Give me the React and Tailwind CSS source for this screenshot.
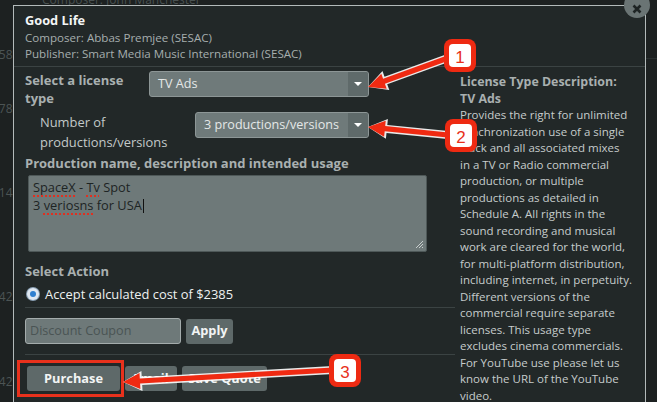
import React from 'react'

const descriptionLines = [
  'Provides the right for unlimited',
  'synchronization use of a single',
  'track and all associated mixes',
  'in a TV or Radio commercial',
  'production, or multiple',
  'productions as detailed in',
  'Schedule A. All rights in the',
  'sound recording and musical',
  'work are cleared for the world,',
  'for multi-platform distribution,',
  'including internet, in perpetuity.',
  'Different versions of the',
  'commercial require separate',
  'licenses. This usage type',
  'excludes cinema commercials.',
  'For YouTube use please let us',
  'know the URL of the YouTube',
  'video.',
]

function arrowPoints([tx, ty], [hx, hy], shaft = 2.6, head = 8, len = 17) {
  const dx = hx - tx
  const dy = hy - ty
  const d = Math.hypot(dx, dy)
  const ux = dx / d
  const uy = dy / d
  const nx = -uy
  const ny = ux
  const bx = hx - ux * len
  const by = hy - uy * len
  const p = [
    [tx + nx * shaft, ty + ny * shaft],
    [bx + nx * shaft, by + ny * shaft],
    [bx + nx * head, by + ny * head],
    [hx, hy],
    [bx - nx * head, by - ny * head],
    [bx - nx * shaft, by - ny * shaft],
    [tx - nx * shaft, ty - ny * shaft],
  ]
  return p.map(([x, y]) => `${x.toFixed(1)},${y.toFixed(1)}`).join(' ')
}

function Badge({ x, y, n }) {
  return (
    <g>
      <rect x={x} y={y} width="32" height="33" rx="8" fill="#ee2a12" />
      <rect x={x + 5} y={y + 5} width="22" height="23" rx="4" fill="#ffffff" />
      <text
        x={x + 16}
        y={y + 23.5}
        textAnchor="middle"
        fontSize="17"
        fontFamily="Liberation Sans, Arial, sans-serif"
        fill="#e8301a"
      >
        {n}
      </text>
    </g>
  )
}

function Callouts() {
  const arrows = [
    [[448, 58], [368, 87]],
    [[448, 135], [368, 127]],
    [[333, 370], [123, 382]],
  ]
  return (
    <svg className="absolute inset-0 pointer-events-none" width="657" height="402">
      {arrows.map(([a, b], i) => (
        <polygon key={'o' + i} points={arrowPoints(a, b, 4, 10, 19)} fill="#ffffff" opacity="0.9" />
      ))}
      {arrows.map(([a, b], i) => (
        <polygon key={'r' + i} points={arrowPoints(a, b)} fill="#ef2a12" />
      ))}
      <Badge x={444} y={39} n="1" />
      <Badge x={445} y={119} n="2" />
      <Badge x={329} y={354} n="3" />
    </svg>
  )
}

function Select({ value, className }) {
  return (
    <div className={`flex h-[26px] shrink-0 rounded-[3px] border border-[#8d9696] bg-[#6f7a7a] ${className}`}>
      <div className="flex-1 px-[8px] text-[12.6px] leading-[24px] text-[#e4e8e8] truncate">{value}</div>
      <div className="flex w-[20px] items-center justify-center rounded-r-[2px] bg-[#5f6a6a]">
        <div className="h-0 w-0 border-x-[4px] border-t-[4px] border-x-transparent border-t-white" />
      </div>
    </div>
  )
}

function Btn({ children, className = '' }) {
  return (
    <div className={`flex h-[25px] items-center justify-center rounded-[3px] bg-[#5e6969] text-[12.8px] font-bold text-[#f2f4f4] ${className}`}>
      {children}
    </div>
  )
}

const wavy = 'underline decoration-dotted decoration-[#e03020] decoration-2 underline-offset-[3px]'

export default function App() {
  return (
    <div className="relative h-[402px] w-[657px] overflow-hidden bg-[#1d2121] font-['Open_Sans',sans-serif]">
      {/* page behind the dialog */}
      <div className="absolute left-[42px] top-[-9px] text-[12px] text-[#4a5252]">Composer: John Manchester</div>
      {[['358', 46], ['278', 100], ['714', 184], ['642', 288], ['642', 373]].map(([t, y]) => (
        <div key={y} className="absolute left-[-8px] text-[12px] text-[#4c5454]" style={{ top: y }}>
          {t}
        </div>
      ))}
      <div className="absolute right-0 top-[58px] h-px w-[12px] bg-[#2a3030]" />

      {/* dialog */}
      <div className="absolute left-[13px] top-[5px] h-[420px] w-[633px] border border-[#b3baba] bg-[#222828]">
        <div className="px-[11px] pt-[4px]">
          <div className="text-[12.8px] font-bold leading-[20px] text-[#f4f6f6]">Good Life</div>
          <div className="text-[11.6px] leading-[16px] text-[#a6aeae]">Composer: Abbas Premjee (SESAC)</div>
          <div className="text-[11.6px] leading-[16px] text-[#a6aeae]">Publisher: Smart Media Music International (SESAC)</div>
        </div>
        <div className="mt-[4px] h-px bg-[#3b4343]" />

        <div className="flex">
          {/* left column */}
          <div className="w-[441px] shrink-0 pl-[11px]">
            <div className="mt-[4px] flex items-start">
              <div className="w-[124px] pr-[12px] text-[13px] font-bold leading-[18px] text-[#a9b0b0]">Select a license type</div>
              <Select value="TV Ads" className="w-[220px]" />
            </div>
            <div className="mt-[5px] flex items-start">
              <div className="w-[170px] pl-[15px] text-[12.9px] leading-[20px] text-[#c3c9c9]">Number of productions/versions</div>
              <Select value="3 productions/versions" className="w-[174px]" />
            </div>
            <div className="mt-[2px] text-[13px] font-bold leading-[18px] text-[#a9b0b0]">
              Production name, description and intended usage
            </div>
            <div className="relative ml-[3px] mt-[3px] h-[77px] w-[399px] rounded-[2px] border border-[#4e5858] bg-[#6e7979] px-[4px] pt-[3px] text-[12.8px] leading-[17px] text-[#1d2424]">
              <div>
                <span className={wavy}>SpaceX</span> - <span className={wavy}>Tv</span> Spot
              </div>
              <div>
                3 <span className={wavy}>veriosns</span> for USA
                <span className="ml-px inline-block h-[14px] w-px translate-y-[3px] bg-[#111]" />
              </div>
              <svg className="absolute bottom-[2px] right-[2px]" width="9" height="9">
                <path d="M1 8 L8 1 M4 8 L8 4 M7 8 L8 7" stroke="#c8cece" strokeWidth="1" />
              </svg>
            </div>
            <div className="mt-[10px] text-[13px] font-bold leading-[18px] text-[#a9b0b0]">Select Action</div>
            <div className="mt-[5px] flex items-center gap-[6px] pl-[2px]">
              <div className="flex h-[12px] w-[12px] items-center justify-center rounded-full bg-[#dfe8f2] shadow-[0_0_0_1px_#8aa0b5]">
                <div className="h-[6px] w-[6px] rounded-full bg-[#2f7fd0]" />
              </div>
              <div className="text-[12.9px] leading-[18px] text-[#eef1f1]">Accept calculated cost of $2385</div>
            </div>
            <div className="mt-[4px] h-px w-[430px] bg-[#3b4343]" />
            <div className="mt-[10px] flex items-center gap-[5px]">
              <div className="h-[26px] w-[156px] rounded-[3px] border border-[#a4acac] bg-[#6e7979] px-[4px] text-[12.6px] leading-[24px] text-[#4a5454]">
                Discount Coupon
              </div>
              <Btn className="w-[47px]">Apply</Btn>
            </div>
            <div className="mt-[10px] h-px w-[430px] bg-[#3b4343]" />
            <div className="mt-[11px] flex gap-[5px] pl-[2px]">
              <div className="relative">
                <Btn className="w-[93px]">Purchase</Btn>
                <div className="absolute left-[-10px] top-[-6px] h-[37px] w-[107px] border-[3px] border-[#e8311c]" />
              </div>
              <Btn className="w-[52px]">Email</Btn>
              <Btn className="w-[85px]">Save Quote</Btn>
            </div>
          </div>

          {/* right column */}
          <div className="w-[180px] shrink-0 pl-[5px] pt-[6px]">
            <div className="text-[12.4px] font-bold leading-[17px] text-[#a9b0b0]">License Type Description:</div>
            <div className="text-[12.4px] font-bold leading-[17px] text-[#a9b0b0]">TV Ads</div>
            <div className="whitespace-nowrap text-[11.5px] leading-[16.5px] text-[#c6cccc]">
              {descriptionLines.map((l) => (
                <div key={l}>{l}</div>
              ))}
            </div>
          </div>
        </div>
      </div>

      {/* close button */}
      <div className="absolute left-[624px] top-[-8px] flex h-[26px] w-[26px] items-center justify-center rounded-full bg-[#6a7474]">
        <svg width="10" height="10" viewBox="0 0 10 10" className="mt-[7px]">
          <path d="M1.5 1.5 L8.5 8.5 M8.5 1.5 L1.5 8.5" stroke="#1e2424" strokeWidth="2.6" />
        </svg>
      </div>

      <Callouts />
    </div>
  )
}
